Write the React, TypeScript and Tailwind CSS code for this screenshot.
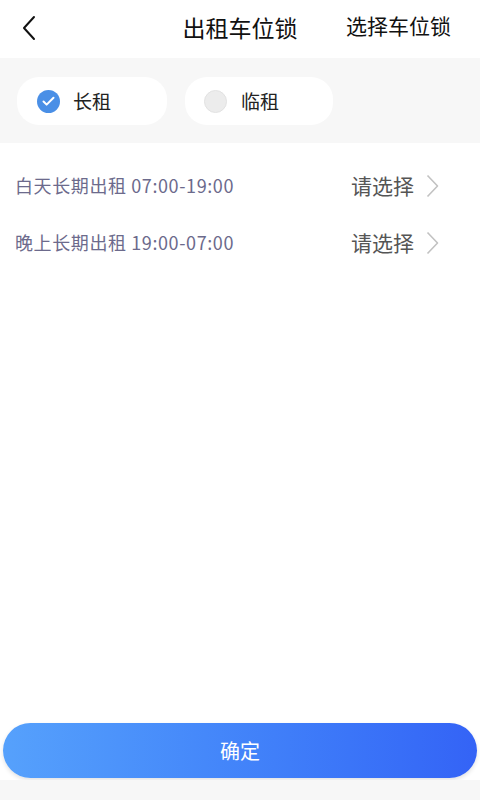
import { Check } from 'lucide-react';
import { useState } from 'react';

const font = { fontFamily: '"Noto Sans CJK SC", "Noto Sans", sans-serif' };

const rows = [
  { label: '白天长期出租 07:00-19:00' },
  { label: '晚上长期出租 19:00-07:00' },
];

function Radio({ on }: { on: boolean }) {
  return on ? (
    <span className="h-[23px] w-[23px] rounded-full bg-[#4a8fe6] flex items-center justify-center">
      <Check className="h-[15px] w-[15px] text-white" strokeWidth={3.2} />
    </span>
  ) : (
    <span className="h-[23px] w-[23px] rounded-full bg-[#ececec] border border-[#e2e2e2]" />
  );
}

export default function App() {
  const [mode, setMode] = useState<'long' | 'temp'>('long');

  return (
    <div className="h-[800px] w-[480px] flex flex-col bg-white overflow-hidden" style={font}>
      {/* header */}
      <div className="h-[58px] flex items-center relative shrink-0">
        <button className="ml-[21px] -mt-[2px]" aria-label="back">
          <svg width="16" height="26" viewBox="0 0 16 26" fill="none">
            <path d="M13 2 L3 13 L13 24" stroke="#111" strokeWidth="2" strokeLinecap="round" strokeLinejoin="round" />
          </svg>
        </button>
        <div className="absolute left-1/2 -translate-x-1/2 top-[11px] text-[23px] leading-[32px] text-[#111]">出租车位锁</div>
        <div className="ml-auto mr-[29px] -mt-[6px] text-[21px] text-[#111]">选择车位锁</div>
      </div>

      {/* type selector */}
      <div className="bg-[#f7f7f7] h-[85px] shrink-0 flex items-start pt-[19px] pl-[17px] gap-[18px]">
        <button
          onClick={() => setMode('long')}
          className="w-[150px] h-[48px] rounded-[22px] bg-white flex items-center pl-[20px]"
        >
          <Radio on={mode === 'long'} />
          <span className="ml-[13px] text-[19px] text-[#222]">长租</span>
        </button>
        <button
          onClick={() => setMode('temp')}
          className="w-[148px] h-[48px] rounded-[22px] bg-white flex items-center pl-[19px]"
        >
          <Radio on={mode === 'temp'} />
          <span className="ml-[14px] text-[19px] text-[#222]">临租</span>
        </button>
      </div>

      {/* rows */}
      <div className="pt-[14px] flex flex-col">
        {rows.map((r) => (
          <div key={r.label} className="h-[57px] flex items-center pl-[15px] pr-[41px]">
            <span className="text-[18px] tracking-[0.6px] text-[#6c6a8c]">{r.label}</span>
            <span className="ml-auto text-[21px] text-[#555]">请选择</span>
            <svg className="ml-[12px]" width="13" height="24" viewBox="0 0 13 24" fill="none">
              <path d="M1.5 1.5 L11.5 12 L1.5 22.5" stroke="#c2c2c2" strokeWidth="1.6" strokeLinejoin="round" />
            </svg>
          </div>
        ))}
      </div>

      <div className="flex-1" />

      {/* confirm */}
      <div className="px-[3px] pb-[2px] shrink-0">
        <button className="w-full h-[55px] rounded-full bg-gradient-to-r from-[#56a1fc] to-[#3463f6] text-white text-[20px] shadow-[0_2px_4px_rgba(0,0,0,0.12)]">
          确定
        </button>
      </div>
      <div className="h-[20px] bg-[#f7f7f7] shrink-0" />
    </div>
  );
}
